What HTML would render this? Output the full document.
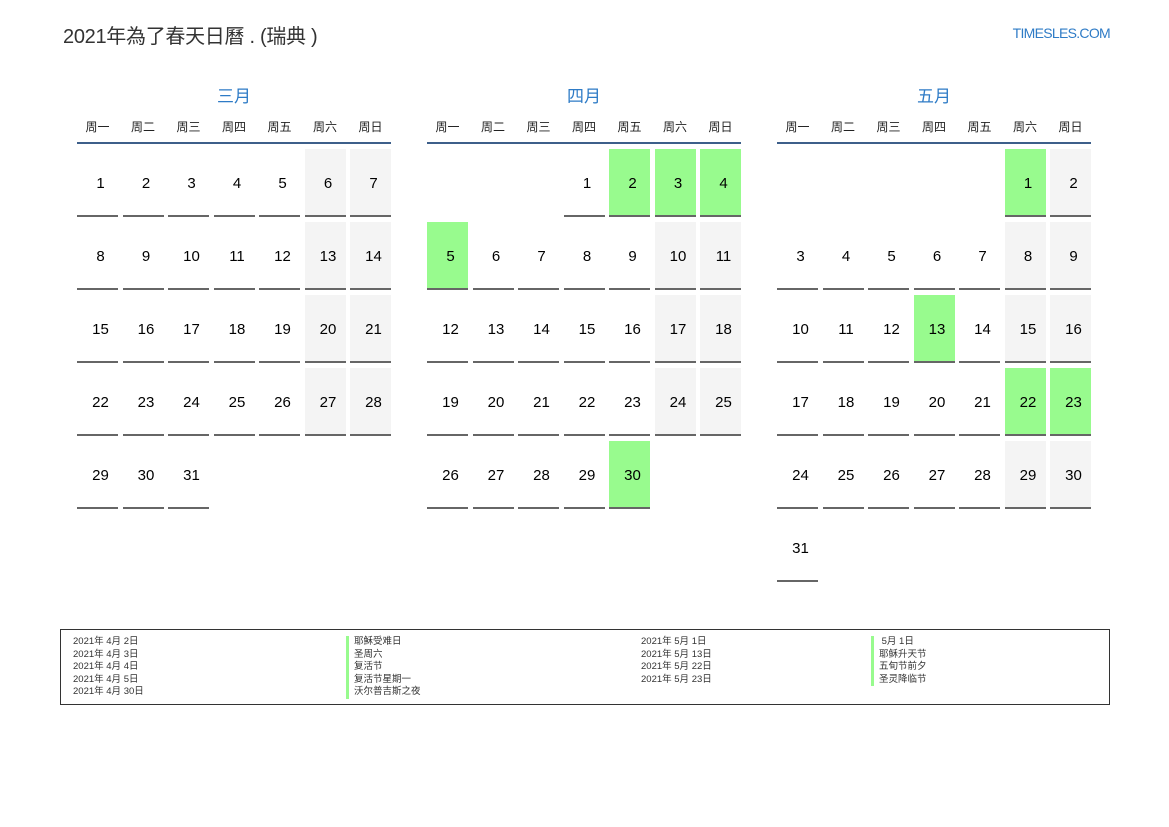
<!DOCTYPE html>
<html><head><meta charset="utf-8"><style>
body{margin:0;width:1169px;height:827px;background:#fff;position:relative;overflow:hidden;font-family:"Liberation Sans","Noto Sans CJK SC",sans-serif;}
.title{position:absolute;left:63px;top:20px;font-size:20px;color:#333;letter-spacing:-0.3px;}
.logo{position:absolute;right:59px;top:25px;font-size:14px;color:#2e7bc6;letter-spacing:-0.7px;}
.m{position:absolute;top:85px;width:314px;}
.mt{text-align:center;font-size:17px;color:#2e7bc6;height:24px;line-height:24px;}
.wd{display:flex;gap:4.5px;margin-top:9px;height:18px;border-bottom:2px solid #3d5f8a;padding-bottom:6px;}
.wd div{width:41px;text-align:center;font-size:12px;color:#222;line-height:18px;}
.row{display:flex;gap:4.5px;margin-top:5px;height:68px;}
.c{height:66px;border-bottom:2px solid #666;font-size:15px;color:#000;text-align:center;line-height:70px;padding-left:6px;box-sizing:content-box;width:35px;}
.w{background:#f4f4f4}
.h{background:#98fb8e}
.e{border-bottom:none}
.lg{position:absolute;left:60px;top:629px;width:1048px;height:74px;border:1px solid #333;font-size:9.5px;color:#333;}
.lg div{position:absolute;line-height:12.5px;white-space:pre;}
.bar span{display:block;border-left:3px solid #98fb8e;padding-left:5px;margin-bottom:0;}
</style></head><body>
<div class="title">2021年為了春天日曆 . (瑞典 )</div>
<div class="logo">TIMESLES.COM</div>

<div class="m" style="left:77px">
<div class="mt">三月</div>
<div class="wd"><div>周一</div><div>周二</div><div>周三</div><div>周四</div><div>周五</div><div>周六</div><div>周日</div></div>
<div class="row"><div class="c">1</div><div class="c">2</div><div class="c">3</div><div class="c">4</div><div class="c">5</div><div class="c w">6</div><div class="c w">7</div></div>
<div class="row"><div class="c">8</div><div class="c">9</div><div class="c">10</div><div class="c">11</div><div class="c">12</div><div class="c w">13</div><div class="c w">14</div></div>
<div class="row"><div class="c">15</div><div class="c">16</div><div class="c">17</div><div class="c">18</div><div class="c">19</div><div class="c w">20</div><div class="c w">21</div></div>
<div class="row"><div class="c">22</div><div class="c">23</div><div class="c">24</div><div class="c">25</div><div class="c">26</div><div class="c w">27</div><div class="c w">28</div></div>
<div class="row"><div class="c">29</div><div class="c">30</div><div class="c">31</div></div>
</div>

<div class="m" style="left:427px">
<div class="mt">四月</div>
<div class="wd"><div>周一</div><div>周二</div><div>周三</div><div>周四</div><div>周五</div><div>周六</div><div>周日</div></div>
<div class="row"><div class="c e"></div><div class="c e"></div><div class="c e"></div><div class="c">1</div><div class="c h">2</div><div class="c h">3</div><div class="c h">4</div></div>
<div class="row"><div class="c h">5</div><div class="c">6</div><div class="c">7</div><div class="c">8</div><div class="c">9</div><div class="c w">10</div><div class="c w">11</div></div>
<div class="row"><div class="c">12</div><div class="c">13</div><div class="c">14</div><div class="c">15</div><div class="c">16</div><div class="c w">17</div><div class="c w">18</div></div>
<div class="row"><div class="c">19</div><div class="c">20</div><div class="c">21</div><div class="c">22</div><div class="c">23</div><div class="c w">24</div><div class="c w">25</div></div>
<div class="row"><div class="c">26</div><div class="c">27</div><div class="c">28</div><div class="c">29</div><div class="c h">30</div></div>
</div>

<div class="m" style="left:777px">
<div class="mt">五月</div>
<div class="wd"><div>周一</div><div>周二</div><div>周三</div><div>周四</div><div>周五</div><div>周六</div><div>周日</div></div>
<div class="row"><div class="c e"></div><div class="c e"></div><div class="c e"></div><div class="c e"></div><div class="c e"></div><div class="c h">1</div><div class="c w">2</div></div>
<div class="row"><div class="c">3</div><div class="c">4</div><div class="c">5</div><div class="c">6</div><div class="c">7</div><div class="c w">8</div><div class="c w">9</div></div>
<div class="row"><div class="c">10</div><div class="c">11</div><div class="c">12</div><div class="c h">13</div><div class="c">14</div><div class="c w">15</div><div class="c w">16</div></div>
<div class="row"><div class="c">17</div><div class="c">18</div><div class="c">19</div><div class="c">20</div><div class="c">21</div><div class="c h">22</div><div class="c h">23</div></div>
<div class="row"><div class="c">24</div><div class="c">25</div><div class="c">26</div><div class="c">27</div><div class="c">28</div><div class="c w">29</div><div class="c w">30</div></div>
<div class="row"><div class="c">31</div></div>
</div>

<div class="lg">
<div style="left:12px;top:6px">2021年 4月 2日
2021年 4月 3日
2021年 4月 4日
2021年 4月 5日
2021年 4月 30日</div>
<div class="bar" style="left:285px;top:6px"><span>耶穌受难日</span><span>圣周六</span><span>复活节</span><span>复活节星期一</span><span>沃尔普吉斯之夜</span></div>
<div style="left:580px;top:6px">2021年 5月 1日
2021年 5月 13日
2021年 5月 22日
2021年 5月 23日</div>
<div class="bar" style="left:810px;top:6px"><span> 5月 1日</span><span>耶稣升天节</span><span>五旬节前夕</span><span>圣灵降临节</span></div>
</div>
</body></html>
